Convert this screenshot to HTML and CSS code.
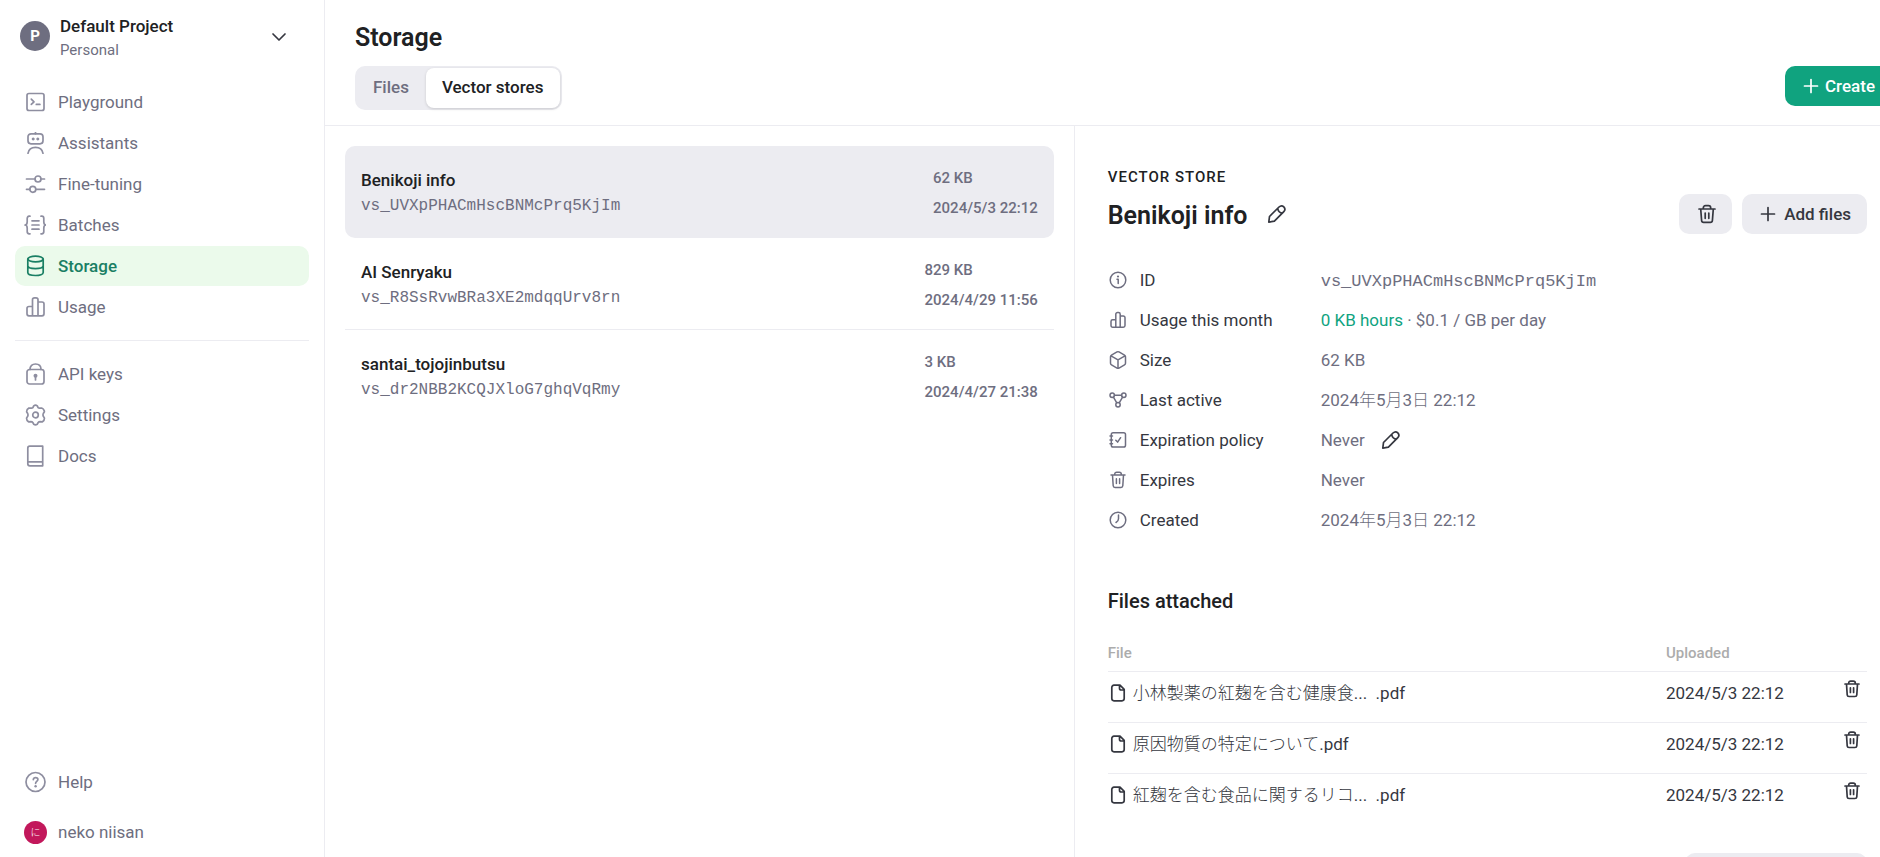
FILE: index.html
```html
<!DOCTYPE html>
<html lang="en">
<head>
<meta charset="utf-8">
<title>Storage</title>
<link rel="stylesheet" href="styles.css">
</head>
<body>
<svg class="sprite" aria-hidden="true">
  <symbol id="i-playground" viewBox="0 0 22 22"><rect x="3" y="2.5" width="17" height="17" rx="2"/><path d="M7.3 8.2 10 10.8l-2.7 2.6M12.3 13.4h3.6"/></symbol>
  <symbol id="i-assistants" viewBox="0 0 22 22"><rect x="4" y="1.8" width="15" height="10" rx="3"/><path d="M11.500 1.800V0M4 21.300c.6-3.700 3.600-6 7.500-6s6.900 2.300 7.500 6"/><path class="solid" d="M9.200 5.400a1.500 1.500 0 1 0 .01 0zM13.800 5.400a1.500 1.500 0 1 0 .01 0z"/></symbol>
  <symbol id="i-tuning" viewBox="0 0 22 22"><circle cx="14" cy="6" r="3"/><circle cx="8.800" cy="16.300" r="3"/><path d="M2.500 6H11M17 6h3.500M2.500 16.300h3.300M11.800 16.300h8.700"/></symbol>
  <symbol id="i-batches" viewBox="0 0 22 22"><path d="M6 2.200H5.200C3.700 2.200 3.200 3.300 3.200 4.500v3.200C3.200 9.700 2.500 11 1 11c1.500 0 2.200 1.300 2.200 3.300v3.200c0 1.200.5 2.300 2 2.300H6M17 2.200h.8c1.500 0 2 1.100 2 2.300v3.200c0 2 .7 3.300 2.200 3.300-1.500 0-2.200 1.300-2.200 3.300v3.200c0 1.200-.5 2.300-2 2.300H17M8 6.800h7M8 11h7M8 15.200h7"/></symbol>
  <symbol id="i-storage" viewBox="0 0 22 22"><ellipse cx="11.500" cy="4" rx="7.700" ry="2.900"/><path d="M3.800 4v13.500c0 1.900 3.400 3 7.700 3s7.700-1.100 7.700-3V4M3.800 10.800c0 1.700 3.400 2.800 7.700 2.800s7.700-1.100 7.700-2.800"/></symbol>
  <symbol id="i-usage" viewBox="0 0 22 22"><path d="M8.500 19.800V3.800a2 2 0 0 1 2-2h1.500a2 2 0 0 1 2 2v16M8.500 10.500H5a2 2 0 0 0-2 2v5.300a2 2 0 0 0 2 2h13a2 2 0 0 0 2-2V8a2 2 0 0 0-2-2h-4"/></symbol>
  <symbol id="i-lock" viewBox="0 0 22 22"><rect x="3" y="6.500" width="17" height="14.500" rx="2.500"/><path d="M6 6.500C6 3 8.300 1 11.500 1S17 3 17 6.500M11.500 14v3"/><circle class="solid" cx="11.500" cy="12.800" r="2"/></symbol>
  <symbol id="i-settings" viewBox="0 0 22 22"><circle cx="11.500" cy="11" r="2.800"/><path d="M9.700 1.900Q11.500.5 13.300 1.900L14.100 3.700Q14.800 4.300 15.700 4.200L17.700 4Q19.500 4.600 20.300 6.900L20.400 7.700 19.300 9.500Q18.700 11 19.300 12.300L20.500 14.100Q20.500 16.500 18.500 17.800L16.100 17.700Q14.800 17.700 14.200 18.500L13.200 20.300Q11.500 21.500 9.800 20.300L8.800 18.500Q8.200 17.700 6.900 17.700L4.500 17.800Q2.500 16.500 2.500 14.100L3.700 12.300Q4.300 11 3.700 9.500L2.600 7.700Q2.700 5 4.800 4.100L7.300 4.200Q8.200 4.300 8.900 3.700Z"/></symbol>
  <symbol id="i-docs" viewBox="0 0 22 22"><path d="M5.800 1.200H18.700V20.800H5.800a2 2 0 0 1-2-2V3.200a2 2 0 0 1 2-2zM4.300 16.800H18.700"/></symbol>
  <symbol id="i-help" viewBox="0 0 22 22"><circle cx="11.500" cy="11" r="9.500"/><path d="M9.300 8.600c.2-1.400 1.100-2 2.300-2 1.300 0 2.300.8 2.300 2 0 1.800-2.300 1.900-2.300 3.700"/><circle class="solid" cx="11.600" cy="15.200" r="1.200"/></symbol>
  <symbol id="i-chevron" viewBox="0 0 16 16"><path d="m2 5 6 6 6-6"/></symbol>
  <symbol id="i-plus" viewBox="0 0 16 16"><path d="M8 1.500v13M1.500 8h13"/></symbol>
  <symbol id="i-trash" viewBox="0 0 20 20"><path d="M2 5h16M6.300 5V4c0-1.500.8-2.300 2.300-2.300h2.800c1.500 0 2.300.8 2.300 2.300v1M3.700 5l.9 11.500c.1 1.200.9 1.900 2 1.900h6.800c1.100 0 1.900-.7 2-1.900L16.300 5M8.200 9v5.300M11.800 9v5.300"/></symbol>
  <symbol id="i-pencil" viewBox="0 0 20 20"><path d="M1.800 18.200 2.500 12.500 12 3c1.700-1.600 3.300-1.600 4.800-.2 1.500 1.600 1.500 3.200 0 4.800L7.400 17.200zM10.700 4.300c.4 2.700 2 4.500 4.800 4.900"/></symbol>
  <symbol id="i-info" viewBox="0 0 20 20"><circle cx="10" cy="10" r="7.800"/><path d="M9 9.300h1.200v4.200"/><circle class="solid" cx="10" cy="6.500" r="1.100"/></symbol>
  <symbol id="i-bars" viewBox="0 0 20 20"><path d="M7.800 17.200V4.300a1.700 1.700 0 0 1 1.700-1.700h1a1.700 1.700 0 0 1 1.700 1.700v12.900M7.800 9.700H4.700A1.700 1.700 0 0 0 3 11.400v4.100a1.700 1.700 0 0 0 1.700 1.700h10.600a1.700 1.700 0 0 0 1.700-1.700V7.700A1.700 1.700 0 0 0 15.300 6h-3.100"/></symbol>
  <symbol id="i-bin" viewBox="0 0 20 20"><path d="M3 5h14M6.700 5v-.8c0-1.300.8-2 2-2h2.600c1.200 0 2 .7 2 2V5M4.500 5l.7 10.800c.1 1.100.8 1.700 1.800 1.700h6c1 0 1.700-.6 1.800-1.700L15.500 5M8.400 8.800v4.700M11.600 8.800v4.700"/></symbol>
  <symbol id="i-size" viewBox="0 0 20 20"><path d="M9 1.900q1-.5 2 0l5.500 3.200q1 .6 1 1.700v6.400q0 1.100-1 1.700L11 18.100q-1 .5-2 0l-5.500-3.200q-1-.6-1-1.700V6.800q0-1.100 1-1.700zM3 5.800l7 4 7-4M10 9.800v8.500"/></symbol>
  <symbol id="i-active" viewBox="0 0 20 20"><circle cx="4.200" cy="5.200" r="2.200"/><circle cx="15.800" cy="5.200" r="2.200"/><circle cx="10" cy="14.800" r="2.200"/><path d="M6.400 5.200h7.200M5.400 7.100l3.400 5.800M14.600 7.100l-3.400 5.800"/></symbol>
  <symbol id="i-policy" viewBox="0 0 20 20"><rect x="3.300" y="2.800" width="14.200" height="14.200" rx="1.800"/><path d="M2 6h2.500M2 9.900h2.500M2 13.800h2.500M7.800 10.200l1.800 1.900 3-4.400"/></symbol>
  <symbol id="i-clock" viewBox="0 0 20 20"><circle cx="10" cy="10" r="7.800"/><path d="M10.500 5v3.800q0 2.300-2.500 3.700"/></symbol>
  <symbol id="i-file" viewBox="0 0 20 20"><path d="M12 2.200H6a2.200 2.200 0 0 0-2.200 2.200v11.200A2.200 2.200 0 0 0 6 17.800h8a2.200 2.200 0 0 0 2.200-2.200V6.400L12 2.200zM11.500 2.500v2.700a1.800 1.800 0 0 0 1.800 1.800H16"/></symbol>
</svg>

<div class="app">
  <aside class="sidebar">
    <button class="project" type="button">
      <span class="project-avatar">P</span>
      <span class="project-text"><span class="project-name">Default Project</span><span class="project-org">Personal</span></span>
      <svg class="chevron"><use href="#i-chevron"/></svg>
    </button>
    <nav class="nav">
      <a class="nav-item" href="#"><svg><use href="#i-playground"/></svg>Playground</a>
      <a class="nav-item" href="#"><svg><use href="#i-assistants"/></svg>Assistants</a>
      <a class="nav-item" href="#"><svg><use href="#i-tuning"/></svg>Fine-tuning</a>
      <a class="nav-item" href="#"><svg><use href="#i-batches"/></svg>Batches</a>
      <a class="nav-item active" href="#"><svg><use href="#i-storage"/></svg>Storage</a>
      <a class="nav-item" href="#"><svg><use href="#i-usage"/></svg>Usage</a>
      <hr class="nav-rule">
      <a class="nav-item" href="#"><svg><use href="#i-lock"/></svg>API keys</a>
      <a class="nav-item" href="#"><svg><use href="#i-settings"/></svg>Settings</a>
      <a class="nav-item" href="#"><svg><use href="#i-docs"/></svg>Docs</a>
    </nav>
    <div class="account">
      <a class="nav-item" href="#"><svg><use href="#i-help"/></svg>Help</a>
      <a class="nav-item" href="#"><span class="user-avatar">に</span>neko niisan</a>
    </div>
  </aside>

  <main class="main">
    <header class="header">
      <h1>Storage</h1>
      <div class="toolbar">
        <div class="tabs">
          <button class="tab" type="button">Files</button>
          <button class="tab selected" type="button">Vector stores</button>
        </div>
        <button class="btn primary" type="button"><svg><use href="#i-plus"/></svg>Create</button>
      </div>
    </header>

    <div class="panes">
      <section class="list">
        <a class="store current" href="#">
          <span class="store-main"><span class="store-name">Benikoji info</span><span class="store-id">vs_UVXpPHACmHscBNMcPrq5KjIm</span></span>
          <span class="store-meta"><span>62 KB</span><span>2024/5/3 22:12</span></span>
        </a>
        <a class="store ruled" href="#">
          <span class="store-main"><span class="store-name">AI Senryaku</span><span class="store-id">vs_R8SsRvwBRa3XE2mdqqUrv8rn</span></span>
          <span class="store-meta"><span>829 KB</span><span>2024/4/29 11:56</span></span>
        </a>
        <a class="store" href="#">
          <span class="store-main"><span class="store-name">santai_tojojinbutsu</span><span class="store-id">vs_dr2NBB2KCQJXloG7ghqVqRmy</span></span>
          <span class="store-meta"><span>3 KB</span><span>2024/4/27 21:38</span></span>
        </a>
      </section>

      <section class="detail">
        <p class="eyebrow">VECTOR STORE</p>
        <div class="detail-head">
          <h2>Benikoji info</h2>
          <button class="icon-btn" type="button" aria-label="Rename"><svg><use href="#i-pencil"/></svg></button>
          <div class="actions">
            <button class="btn" type="button" aria-label="Delete"><svg class="trash"><use href="#i-trash"/></svg></button>
            <button class="btn" type="button"><svg><use href="#i-plus"/></svg>Add files</button>
          </div>
        </div>
        <dl class="props">
          <dt><svg><use href="#i-info"/></svg>ID</dt><dd class="mono">vs_UVXpPHACmHscBNMcPrq5KjIm</dd>
          <dt><svg><use href="#i-bars"/></svg>Usage this month</dt><dd><span><span class="green">0 KB hours</span> · $0.1 / GB per day</span></dd>
          <dt><svg><use href="#i-size"/></svg>Size</dt><dd>62 KB</dd>
          <dt><svg><use href="#i-active"/></svg>Last active</dt><dd lang="ja"><span>2024<span class="ja">年</span>5<span class="ja">月</span>3<span class="ja">日</span> 22:12</span></dd>
          <dt><svg><use href="#i-policy"/></svg>Expiration policy</dt><dd>Never <button class="icon-btn" type="button" aria-label="Edit expiration policy"><svg><use href="#i-pencil"/></svg></button></dd>
          <dt><svg><use href="#i-bin"/></svg>Expires</dt><dd>Never</dd>
          <dt><svg><use href="#i-clock"/></svg>Created</dt><dd lang="ja"><span>2024<span class="ja">年</span>5<span class="ja">月</span>3<span class="ja">日</span> 22:12</span></dd>
        </dl>
        <h3>Files attached</h3>
        <table class="files">
          <thead><tr><th class="col-file">File</th><th class="col-date">Uploaded</th><th class="col-act"></th></tr></thead>
          <tbody>
            <tr><td><span class="file"><svg><use href="#i-file"/></svg><span><span class="ja" lang="ja">小林製薬の紅麹を含む健康食</span>... &nbsp;.pdf</span></span></td><td>2024/5/3 22:12</td><td class="act"><button class="icon-btn" type="button" aria-label="Remove file"><svg><use href="#i-bin"/></svg></button></td></tr>
            <tr><td><span class="file"><svg><use href="#i-file"/></svg><span><span class="ja" lang="ja">原因物質の特定について</span>.pdf</span></span></td><td>2024/5/3 22:12</td><td class="act"><button class="icon-btn" type="button" aria-label="Remove file"><svg><use href="#i-bin"/></svg></button></td></tr>
            <tr><td><span class="file"><svg><use href="#i-file"/></svg><span><span class="ja" lang="ja">紅麹を含む食品に関するリコ</span>... &nbsp;.pdf</span></span></td><td>2024/5/3 22:12</td><td class="act"><button class="icon-btn" type="button" aria-label="Remove file"><svg><use href="#i-bin"/></svg></button></td></tr>
          </tbody>
        </table>
        <div class="more"><button class="btn more-btn" type="button" aria-label="More"></button></div>
      </section>
    </div>
  </main>
</div>
</body>
</html>
```
FILE: styles.css
```css
* { box-sizing: border-box; }

body {
  margin: 0;
  overflow: hidden;
  background: #fff;
  color: #353740;
  font: 400 17px/24px Roboto, "Noto Sans CJK JP", sans-serif;
}

h1, h2, h3, p, dl, dd { margin: 0; }
button { border: 0; padding: 0; background: none; color: inherit; font: inherit; }
a { color: inherit; text-decoration: none; }

svg {
  flex: none;
  fill: none;
  stroke: currentColor;
  stroke-width: 1.7;
  stroke-linecap: round;
  stroke-linejoin: round;
}
.solid { fill: currentColor; stroke: none; }
.sprite { display: none; }

.app { display: flex; height: 100vh; }

/* Sidebar */
.sidebar {
  flex: none;
  display: flex;
  flex-direction: column;
  width: 325px;
  padding: 14px 15px 5px;
  border-right: 1px solid #ececf1;
}
.project {
  display: flex;
  align-items: center;
  gap: 10px;
  margin-bottom: 20px;
  padding: 0 22px 0 5px;
  text-align: left;
}
.project-avatar {
  display: grid;
  place-items: center;
  width: 30px;
  height: 30px;
  margin-bottom: 4px;
  border-radius: 50%;
  background: #6e6e80;
  color: #fff;
  font-size: 15px;
  font-weight: 700;
}
.project-text { display: flex; flex-direction: column; flex: 1; }
.project-name { color: #202123; font-weight: 500; }
.project-org { color: #6e6e80; font-size: 15px; }
.chevron { width: 16px; height: 16px; margin-bottom: 2px; }

.nav, .account { display: flex; flex-direction: column; gap: 1px; }
.account { gap: 10px; margin-top: auto; }
.nav-item {
  display: flex;
  align-items: center;
  gap: 12px;
  height: 40px;
  padding-left: 9px;
  border-radius: 10px;
  color: #6e6e80;
}
.nav-item svg { width: 22px; height: 22px; color: #8e8ea0; overflow: visible; }
.nav-item.active { background: #ebfaeb; color: #1a7f64; font-weight: 500; }
.nav-item.active svg { color: #1a7f64; }
.nav-rule { width: 100%; margin: 12px 0; border: 0; border-top: 1px solid #ececf1; }
.user-avatar {
  display: grid;
  place-items: center;
  width: 23px;
  height: 23px;
  margin-right: -1px;
  border-radius: 50%;
  background: #c2185b;
  color: #fff;
  font-size: 10px;
  font-weight: 300;
}

/* Header */
.main { display: flex; flex-direction: column; flex: 1; min-width: 0; }
.header { padding: 23px 0 15px 30px; border-bottom: 1px solid #ececf1; }
h1, h2 { color: #202123; font-size: 25px; font-weight: 600; line-height: 30px; }
.toolbar { display: flex; align-items: flex-start; justify-content: space-between; margin-top: 13px; margin-right: -13px; }
.tabs { display: flex; height: 44px; padding: 2px; border-radius: 10px; background: #ececf1; }
.tab { padding: 0 17px 2px 16px; border-radius: 8px; color: #6e6e80; font-weight: 500; }
.tab.selected { background: #fff; color: #202123; box-shadow: 0 1px 3px rgba(0, 0, 0, .15); }

.btn {
  display: inline-flex;
  align-items: center;
  gap: 8px;
  height: 40px;
  padding: 0 16px 0 18px;
  border-radius: 10px;
  background: #ececf1;
  font-weight: 500;
}
.btn svg { width: 16px; height: 16px; }
.btn .trash { width: 20px; height: 20px; margin-right: -1px; }
.btn.primary { gap: 6px; padding: 0 18px; background: #10a37f; color: #fff; }

/* Panes */
.panes { display: grid; grid-template-columns: 27fr 29fr; flex: 1; min-height: 0; }
.list { padding: 20px 20px 0; border-right: 1px solid #ececf1; }
.store {
  display: flex;
  justify-content: space-between;
  height: 92px;
  padding: 17px 16px 0;
}
.store.current { border-radius: 10px; background: #ececf1; }
.store.ruled { border-bottom: 1px solid #ececf1; }
.store-main, .store-meta { display: flex; flex-direction: column; }
.store-main { padding-top: 4px; }
.store-name { color: #202123; font-weight: 500; line-height: 26px; }
.store-id { color: #6e6e80; font-family: "Liberation Mono", monospace; font-size: 16px; line-height: 26px; }
.store-meta { color: #6e6e80; font-size: 15px; font-weight: 500; line-height: 30px; }

/* Detail */
.detail { padding: 39px 13px 0 33px; overflow: hidden; }
.eyebrow { color: #202123; font-size: 15px; font-weight: 500; letter-spacing: 1px; }
.detail-head { display: flex; align-items: center; margin: 5px 0 26px; }
.detail-head h2 { padding-top: 4px; }
.actions { display: flex; gap: 10px; margin-left: auto; }
.icon-btn { display: inline-flex; color: #353740; }
.icon-btn svg { width: 20px; height: 20px; }
.detail-head > .icon-btn { margin-left: 20px; }

.props { display: grid; grid-template-columns: 213px 1fr; grid-auto-rows: 40px; align-items: center; }
.props dt { display: flex; align-items: center; gap: 12px; }
.props dt svg { width: 20px; height: 20px; color: #6e6e80; stroke-width: 1.5; }
.props dd { display: flex; align-items: center; gap: 16px; color: #6e6e80; }
.props .mono { padding-top: 3px; font-family: "Liberation Mono", monospace; }
.green { color: #10a37f; }

h3 { margin-top: 49px; color: #202123; font-size: 20px; font-weight: 500; line-height: 24px; }
.files { width: 100%; margin-top: 27px; border-collapse: collapse; table-layout: fixed; }
.files th { height: 31px; padding: 0 0 4px; color: #acacac; font-size: 15px; font-weight: 500; text-align: left; }
.files td { height: 51px; padding: 9px 0 0; border-top: 1px solid #ececf1; vertical-align: top; }
.col-date { width: 176px; }
.col-act { width: 25px; }
.file { display: flex; align-items: center; gap: 5px; }
.file svg { width: 20px; height: 20px; }
.ja { font-weight: 300; }
.files .col-date, .files .act { padding-left: 0; }
.files .act { padding-top: 7px; }
.more { display: flex; justify-content: flex-end; margin-top: 29px; }
.more-btn { width: 182px; }
```
